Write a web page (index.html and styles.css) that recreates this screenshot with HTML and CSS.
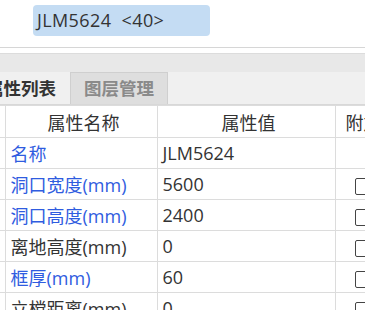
FILE: index.html
```html
<!DOCTYPE html>
<html lang="zh-CN">

<head>
    <meta charset="UTF-8">
    <title>属性列表</title>
    <link rel="stylesheet" href="styles.css">
</head>

<body>

    <div class="top">
        <span class="tag">JLM5624&nbsp;&nbsp;&lt;40&gt;</span>
    </div>

    <div class="panel">
        <div class="band"></div>

        <div class="tabs">
            <div class="tab active">属性列表</div>
            <div class="tab">图层管理</div>
        </div>

        <table class="props">
            <colgroup>
                <col class="c-gap">
                <col class="c-name">
                <col class="c-value">
                <col class="c-extra">
            </colgroup>
            <thead>
                <tr>
                    <th></th>
                    <th>属性名称</th>
                    <th>属性值</th>
                    <th class="left">附加</th>
                </tr>
            </thead>
            <tbody>
                <tr>
                    <td></td>
                    <td class="blue">名称</td>
                    <td>JLM5624</td>
                    <td></td>
                </tr>
                <tr>
                    <td></td>
                    <td class="blue">洞口宽度(mm)</td>
                    <td>5600</td>
                    <td><span class="check"></span></td>
                </tr>
                <tr>
                    <td></td>
                    <td class="blue">洞口高度(mm)</td>
                    <td>2400</td>
                    <td><span class="check"></span></td>
                </tr>
                <tr>
                    <td></td>
                    <td>离地高度(mm)</td>
                    <td>0</td>
                    <td><span class="check"></span></td>
                </tr>
                <tr>
                    <td></td>
                    <td class="blue">框厚(mm)</td>
                    <td>60</td>
                    <td><span class="check"></span></td>
                </tr>
                <tr>
                    <td></td>
                    <td>立樘距离(mm)</td>
                    <td>0</td>
                    <td><span class="check"></span></td>
                </tr>
            </tbody>
        </table>
    </div>

</body>

</html>
```

FILE: styles.css
```css
body {
    color: #333;
    font-family: "Open Sans", "Noto Sans CJK SC", sans-serif;
    font-size: 18px;
    margin: 0;
    overflow: hidden;
    width: 365px;
    height: 310px;
}

/* ====== TOP LABEL ====== */

.top {
    border-bottom: 1px solid #d6d6d6;
    box-sizing: border-box;
    height: 48px;
    padding: 5px 0 0 33px;
}

.tag {
    background-color: #c4dcf3;
    border-radius: 4px;
    display: inline-block;
    height: 31px;
    letter-spacing: 0.4px;
    line-height: 31px;
    padding: 0 46px 0 4px;
}

/* ====== PANEL ====== */

.panel {
    padding-top: 5px;
}

.band {
    background-color: #e8e8e8;
    border-top: 1px solid #dcdcdc;
    height: 18px;
}

.tabs {
    background-color: #f0f0f0;
    border-bottom: 1px solid #d8d8d8;
    display: flex;
    height: 32px;
    margin-left: -28px;
}

.tab {
    box-sizing: border-box;
    font-size: 17.5px;
    font-weight: 700;
    line-height: 32px;
    padding: 0 14px;
    white-space: nowrap;
}

.tab.active {
    background-color: #f0f0f0;
    color: #333;
}

.tab:not(.active) {
    background-color: #dedede;
    border: 1px solid #cfcfcf;
    border-bottom: none;
    color: #8a8a8a;
    line-height: 31px;
    padding: 0 13px;
}

/* ====== TABLE ====== */

.props {
    border-collapse: collapse;
    table-layout: fixed;
    width: 420px;
}

.c-gap {
    width: 5px;
}

.c-name {
    width: 152px;
}

.c-value {
    width: 178px;
}

.props th,
.props td {
    border: 1px solid #dcdcdc;
    height: 30px;
    overflow: hidden;
    padding: 0 0 0 5px;
    white-space: nowrap;
}

.props th {
    font-weight: 400;
    height: 31px;
    text-align: center;
}

.props th.left {
    padding-left: 10px;
    text-align: left;
}

.props td:first-child,
.props th:first-child {
    border-left: none;
    padding: 0;
}

.blue {
    color: #2f5ce0;
}

.check {
    border: 1px solid #444;
    border-radius: 2px;
    display: inline-block;
    height: 15px;
    margin-left: 14px;
    vertical-align: middle;
    width: 15px;
}
```
